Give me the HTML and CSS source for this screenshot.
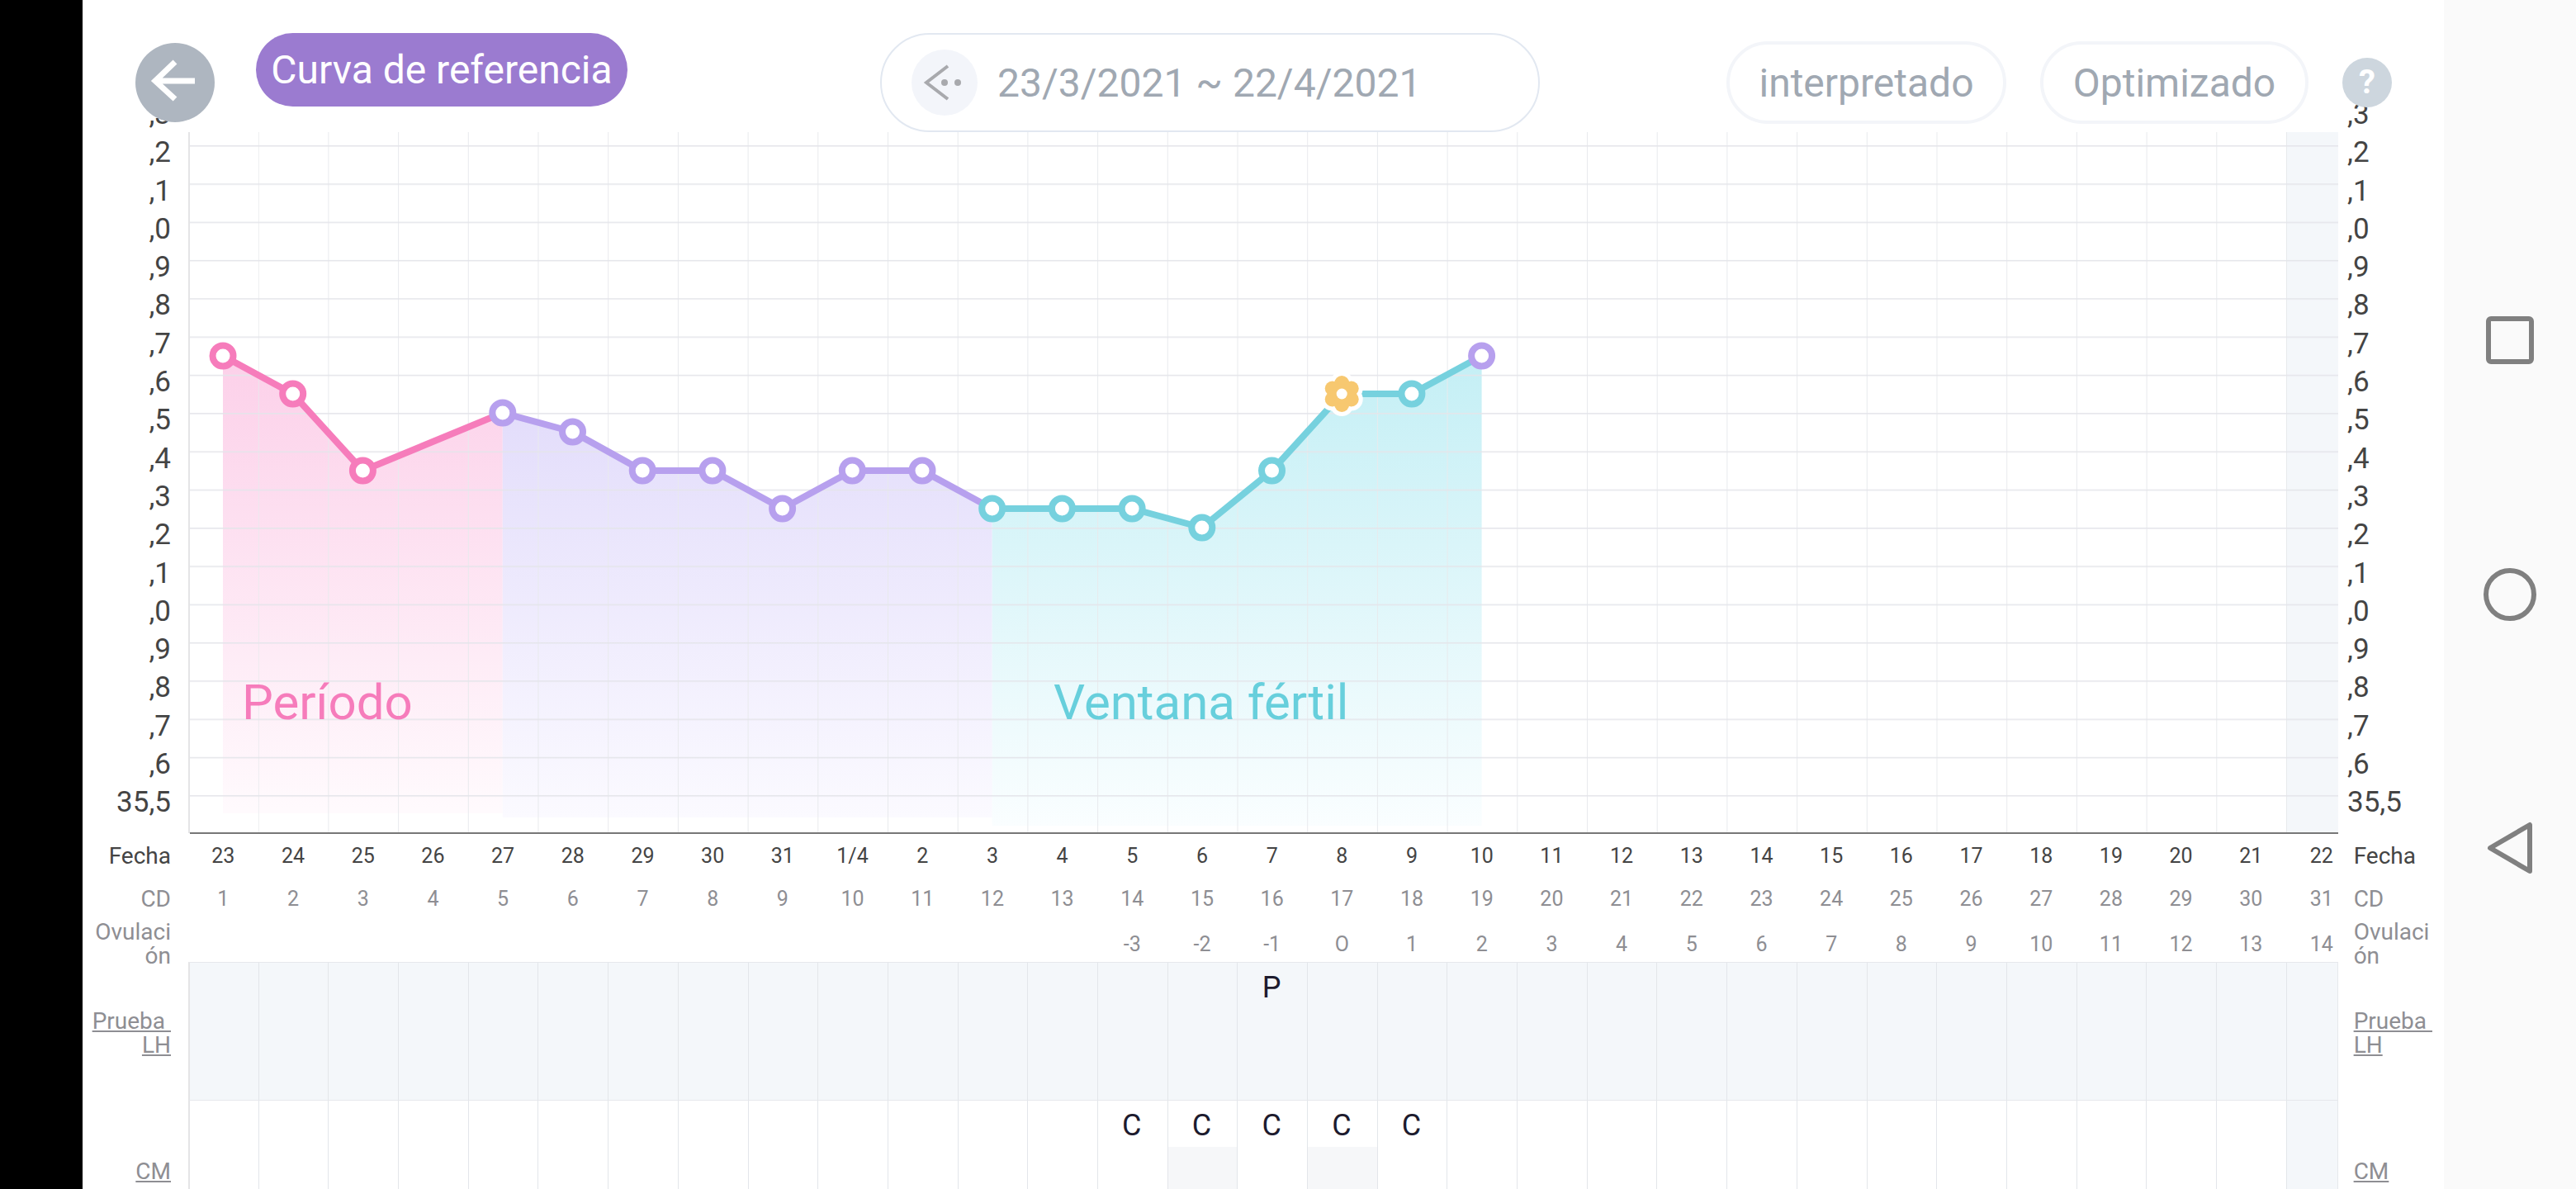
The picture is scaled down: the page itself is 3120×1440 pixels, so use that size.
FILE: index.html
```html
<!DOCTYPE html>
<html>
<head>
  <title>Curva de referencia</title>
  <link rel="stylesheet" href="styles.css">
</head>
<body>
  <div class="black-strip"></div>

  <div class="screen">
    <div class="topbar">
      <div class="back-btn">
        <svg width="96" height="96" viewBox="0 0 96 96"><path d="M72 46H25M48 23L24 46L48 68" fill="none" stroke="#fff" stroke-width="7"/></svg>
      </div>
      <div class="ref-pill">Curva de referencia</div>
      <div class="date-pill">
        <div class="date-icon">
          <svg width="80" height="80" viewBox="0 0 80 80"><path d="M44 20L18 40L44 60" fill="none" stroke="#a8a9ad" stroke-width="4"/><circle cx="40" cy="40" r="4" fill="#a8a9ad"/><circle cx="56" cy="40" r="4" fill="#a8a9ad"/></svg>
        </div>
        <span>23/3/2021 ~ 22/4/2021</span>
      </div>
      <div class="mode-pill mode-first">interpretado</div>
      <div class="mode-pill mode-second">Optimizado</div>
      <div class="help-btn">?</div>
    </div>

    <div class="chart">
      <div class="axis axis-left">
        <span>,3</span><span>,2</span><span>,1</span><span>,0</span><span>,9</span><span>,8</span><span>,7</span><span>,6</span><span>,5</span><span>,4</span><span>,3</span><span>,2</span><span>,1</span><span>,0</span><span>,9</span><span>,8</span><span>,7</span><span>,6</span><span>35,5</span>
      </div>

      <svg class="plot" width="2604" height="850" viewBox="0 0 2604 850">
        <defs>
          <linearGradient id="fillPink" gradientUnits="userSpaceOnUse" x1="0" y1="271" x2="0" y2="820">
            <stop offset="0" stop-color="#fcd0e9"/><stop offset="1" stop-color="#fffafd"/>
          </linearGradient>
          <linearGradient id="fillPurple" gradientUnits="userSpaceOnUse" x1="0" y1="340" x2="0" y2="830">
            <stop offset="0" stop-color="#e3ddfb"/><stop offset="1" stop-color="#fbfaff"/>
          </linearGradient>
          <linearGradient id="fillTeal" gradientUnits="userSpaceOnUse" x1="0" y1="271" x2="0" y2="840">
            <stop offset="0" stop-color="#c4eff5"/><stop offset="1" stop-color="#fafeff"/>
          </linearGradient>
          <pattern id="vlines" width="84.7" height="850" patternUnits="userSpaceOnUse">
            <rect x="0" width="1" height="850" fill="#e8eaed"/>
          </pattern>
          <pattern id="hlines" width="2604" height="46.3" y="16" patternUnits="userSpaceOnUse">
            <rect y="0" width="2604" height="1.5" fill="#e4e5ea"/>
          </pattern>
        </defs>

        <!-- zona del ultimo dia -->
        <rect x="2541" y="0" width="63" height="850" fill="#f4f7fa"/>

        <!-- relleno bajo la curva -->
        <path d="M42 271L126.7 317L211.4 410L380.8 340V825H42Z" fill="url(#fillPink)"/>
        <path d="M380.8 340L465.5 363L550.2 410L634.9 410L719.6 456L804.3 410L889 410L973.7 456V830H380.8Z" fill="url(#fillPurple)"/>
        <path d="M973.7 456L1058.4 456L1143.1 456L1227.8 479L1312.5 410L1397.2 317L1481.9 317L1566.6 271V840H973.7Z" fill="url(#fillTeal)"/>

        <rect x="84.7" y="0" width="2520" height="849" fill="url(#vlines)"/>
        <rect x="2" y="16" width="2602" height="800" fill="url(#hlines)"/>
        <rect x="0" y="0" width="2" height="849" fill="#e4e4e6"/>
        <rect x="2" y="848" width="2602" height="2" fill="#777"/>

        <text class="zone-label zone-pink" x="65" y="711">Período</text>
        <text class="zone-label zone-teal" x="1048" y="711">Ventana fértil</text>

        <polyline class="curve" stroke="#f67cbb" points="42,271 126.7,317 211.4,410 380.8,340"/>
        <polyline class="curve" stroke="#b7a0ee" points="380.8,340 465.5,363 550.2,410 634.9,410 719.6,456 804.3,410 889,410 973.7,456"/>
        <polyline class="curve" stroke="#76d1de" points="973.7,456 1058.4,456 1143.1,456 1227.8,479 1312.5,410 1397.2,317 1481.9,317 1566.6,271"/>

        <g class="dots" stroke="#f67cbb">
          <circle cx="42" cy="271" r="12.5"/><circle cx="126.7" cy="317" r="12.5"/><circle cx="211.4" cy="410" r="12.5"/>
        </g>
        <g class="dots" stroke="#b7a0ee">
          <circle cx="380.8" cy="340" r="12.5"/><circle cx="465.5" cy="363" r="12.5"/><circle cx="550.2" cy="410" r="12.5"/><circle cx="634.9" cy="410" r="12.5"/><circle cx="719.6" cy="456" r="12.5"/><circle cx="804.3" cy="410" r="12.5"/><circle cx="889" cy="410" r="12.5"/><circle cx="1566.6" cy="271" r="12.5"/>
        </g>
        <g class="dots" stroke="#76d1de">
          <circle cx="973.7" cy="456" r="12.5"/><circle cx="1058.4" cy="456" r="12.5"/><circle cx="1143.1" cy="456" r="12.5"/><circle cx="1227.8" cy="479" r="12.5"/><circle cx="1312.5" cy="410" r="12.5"/><circle cx="1481.9" cy="317" r="12.5"/>
        </g>

        <!-- flor de ovulacion -->
        <g transform="translate(1397.2 317)">
          <g fill="#fff" stroke="#fff" stroke-width="10">
            <circle cx="0" cy="-13" r="9"/><circle cx="11.5" cy="-6.5" r="9"/><circle cx="11.5" cy="6.5" r="9"/><circle cx="0" cy="13" r="9"/><circle cx="-11.5" cy="6.5" r="9"/><circle cx="-11.5" cy="-6.5" r="9"/>
          </g>
          <g fill="#f7c870">
            <circle cx="0" cy="-13" r="9"/><circle cx="11.5" cy="-6.5" r="9"/><circle cx="11.5" cy="6.5" r="9"/><circle cx="0" cy="13" r="9"/><circle cx="-11.5" cy="6.5" r="9"/><circle cx="-11.5" cy="-6.5" r="9"/><circle r="12"/>
          </g>
          <circle r="6.5" fill="#fff"/>
        </g>
      </svg>

      <div class="axis axis-right">
        <span>,3</span><span>,2</span><span>,1</span><span>,0</span><span>,9</span><span>,8</span><span>,7</span><span>,6</span><span>,5</span><span>,4</span><span>,3</span><span>,2</span><span>,1</span><span>,0</span><span>,9</span><span>,8</span><span>,7</span><span>,6</span><span>35,5</span>
      </div>
    </div>

    <div class="row row-date">
      <div class="row-label label-left">Fecha</div>
      <span>23</span><span>24</span><span>25</span><span>26</span><span>27</span><span>28</span><span>29</span><span>30</span><span>31</span><span>1/4</span><span>2</span><span>3</span><span>4</span><span>5</span><span>6</span><span>7</span><span>8</span><span>9</span><span>10</span><span>11</span><span>12</span><span>13</span><span>14</span><span>15</span><span>16</span><span>17</span><span>18</span><span>19</span><span>20</span><span>21</span><span class="last">22</span>
      <div class="row-label label-right">Fecha</div>
    </div>

    <div class="row row-cd">
      <div class="row-label label-left">CD</div>
      <span>1</span><span>2</span><span>3</span><span>4</span><span>5</span><span>6</span><span>7</span><span>8</span><span>9</span><span>10</span><span>11</span><span>12</span><span>13</span><span>14</span><span>15</span><span>16</span><span>17</span><span>18</span><span>19</span><span>20</span><span>21</span><span>22</span><span>23</span><span>24</span><span>25</span><span>26</span><span>27</span><span>28</span><span>29</span><span>30</span><span class="last">31</span>
      <div class="row-label label-right">CD</div>
    </div>

    <div class="row row-ovu">
      <div class="row-label label-left">Ovulaci<br>ón</div>
      <span></span><span></span><span></span><span></span><span></span><span></span><span></span><span></span><span></span><span></span><span></span><span></span><span></span><span>-3</span><span>-2</span><span>-1</span><span>O</span><span>1</span><span>2</span><span>3</span><span>4</span><span>5</span><span>6</span><span>7</span><span>8</span><span>9</span><span>10</span><span>11</span><span>12</span><span>13</span><span class="last">14</span>
      <div class="row-label label-right">Ovulaci<br>ón</div>
    </div>

    <div class="row row-track row-lh">
      <div class="row-label label-left"><u>Prueba&nbsp;<br>LH</u></div>
      <div class="cell"></div><div class="cell"></div><div class="cell"></div><div class="cell"></div><div class="cell"></div><div class="cell"></div><div class="cell"></div><div class="cell"></div><div class="cell"></div><div class="cell"></div><div class="cell"></div><div class="cell"></div><div class="cell"></div><div class="cell"></div><div class="cell"></div>
      <div class="cell"><div class="mark">P</div></div>
      <div class="cell"></div><div class="cell"></div><div class="cell"></div><div class="cell"></div><div class="cell"></div><div class="cell"></div><div class="cell"></div><div class="cell"></div><div class="cell"></div><div class="cell"></div><div class="cell"></div><div class="cell"></div><div class="cell"></div><div class="cell"></div><div class="cell"></div>
      <div class="row-label label-right"><u>Prueba&nbsp;<br>LH</u></div>
    </div>

    <div class="row row-track row-cm">
      <div class="row-label label-left"><u>CM</u></div>
      <div class="cell"></div><div class="cell"></div><div class="cell"></div><div class="cell"></div><div class="cell"></div><div class="cell"></div><div class="cell"></div><div class="cell"></div><div class="cell"></div><div class="cell"></div><div class="cell"></div><div class="cell"></div><div class="cell"></div>
      <div class="cell"><div class="mark">C</div></div>
      <div class="cell"><div class="mark">C</div><div class="shade"></div></div>
      <div class="cell"><div class="mark">C</div></div>
      <div class="cell"><div class="mark">C</div><div class="shade"></div></div>
      <div class="cell"><div class="mark">C</div></div>
      <div class="cell"></div><div class="cell"></div><div class="cell"></div><div class="cell"></div><div class="cell"></div><div class="cell"></div><div class="cell"></div><div class="cell"></div><div class="cell"></div><div class="cell"></div><div class="cell"></div><div class="cell"></div><div class="cell"></div>
      <div class="row-label label-right"><u>CM</u></div>
    </div>
  </div>

  <div class="navbar">
    <div class="nav-btn">
      <svg width="60" height="60" viewBox="0 0 60 60"><rect x="4" y="4" width="52" height="52" rx="3" fill="none" stroke="#808080" stroke-width="6"/></svg>
    </div>
    <div class="nav-btn">
      <svg width="66" height="66" viewBox="0 0 66 66"><circle cx="33" cy="33" r="29" fill="none" stroke="#808080" stroke-width="6"/></svg>
    </div>
    <div class="nav-btn">
      <svg width="60" height="70" viewBox="0 0 60 70"><path d="M54 6V62L6 34Z" fill="none" stroke="#808080" stroke-width="6" stroke-linejoin="round"/></svg>
    </div>
  </div>
</body>
</html>
```

FILE: styles.css
```css
body {
  display: flex;
  width: 3120px;
  height: 1440px;
  margin: 0;
  overflow: hidden;
  background-color: #000;
  font-family: Roboto, "Liberation Sans", sans-serif;
}

.black-strip {
  width: 100px;
  flex-shrink: 0;
}

.screen {
  width: 2860px;
  height: 1440px;
  flex-shrink: 0;
  overflow: hidden;
  background-color: #fff;
}

/* barra superior */
.topbar {
  position: relative;
  z-index: 1;
  display: flex;
  align-items: flex-start;
  box-sizing: border-box;
  height: 160px;
  padding: 40px 0 0 64px;
}

.back-btn {
  width: 96px;
  height: 96px;
  margin-top: 12px;
  border-radius: 50%;
  background-color: #aeb6c0;
}

.back-btn svg,
.date-icon svg,
.nav-btn svg {
  display: block;
}

.ref-pill {
  display: flex;
  align-items: center;
  justify-content: center;
  width: 450px;
  height: 89px;
  margin-left: 50px;
  border-radius: 45px;
  background-color: #9b7bd0;
  color: #fff;
  font-size: 48px;
}

.date-pill {
  display: flex;
  align-items: center;
  box-sizing: border-box;
  width: 799px;
  height: 120px;
  margin-left: 306px;
  padding-left: 36px;
  border: 2px solid #e2e8f1;
  border-radius: 60px;
  color: #a0a8b2;
  font-size: 48px;
}

.date-icon {
  width: 80px;
  height: 80px;
  margin-right: 24px;
  border-radius: 50%;
  background-color: #f3f5fa;
}

.mode-pill {
  display: flex;
  align-items: center;
  justify-content: center;
  box-sizing: border-box;
  height: 100px;
  margin-top: 10px;
  border: 4px solid #f3f5f9;
  border-radius: 50px;
  color: #a0a8b2;
  font-size: 48px;
}

.mode-first {
  width: 339px;
  margin-left: 226px;
}

.mode-second {
  width: 325px;
  margin-left: 41px;
}

.help-btn {
  width: 60px;
  height: 60px;
  margin: 30px 0 0 41px;
  border-radius: 50%;
  background-color: #cdd6de;
  color: #fff;
  font-size: 40px;
  font-weight: bold;
  line-height: 60px;
  text-align: center;
}

/* grafica */
.chart {
  display: flex;
  height: 850px;
}

.plot {
  display: block;
  flex-shrink: 0;
}

.axis {
  display: flex;
  flex-direction: column;
  width: 128px;
  flex-shrink: 0;
  margin-top: -44px;
  color: #444;
  font-size: 35px;
}

.axis span {
  height: 46.3px;
  line-height: 46.3px;
}

.axis-left {
  box-sizing: border-box;
  padding-right: 21px;
  text-align: right;
}

.axis-right {
  box-sizing: border-box;
  padding-left: 11px;
}

.zone-label {
  font-size: 60px;
}

.zone-pink {
  fill: #f67cbb;
}

.zone-teal {
  fill: #67cfdc;
}

.curve {
  fill: none;
  stroke-width: 8;
  stroke-linejoin: round;
}

.dots circle {
  fill: #fff;
  stroke-width: 8;
}

/* filas de datos */
.row {
  display: grid;
  grid-template-columns: 128px repeat(30, 84.7px) 63px 128px;
  align-items: center;
  text-align: center;
}

.row-label {
  font-size: 28px;
  line-height: 29px;
}

.label-left {
  padding-right: 21px;
  text-align: right;
}

.label-right {
  padding-left: 19px;
  text-align: left;
}

.last {
  padding-left: 29px;
  text-align: left;
}

.row-date {
  height: 52px;
  color: #444;
  font-size: 25px;
}

.row-cd {
  height: 52px;
  color: #8e8e93;
  font-size: 25px;
}

.row-ovu {
  height: 51px;
  color: #8e8e93;
  font-size: 25px;
}

.row-track {
  align-items: stretch;
  height: 168px;
}

.row-track .row-label {
  align-self: center;
  padding-top: 3px;
  color: #8e8e93;
}

.cell {
  display: flex;
  flex-direction: column;
  border-left: 1px solid #e3e6ea;
  color: #1d1b2e;
  font-size: 36px;
}

.label-left + .cell {
  border-left: 2px solid #e4e4e6;
}

.row-lh .cell {
  border-top: 1px solid #e6e8ec;
  border-bottom: 1px solid #e6e8ec;
  background-color: #f4f7fa;
}

/* ultima columna */
.row-cm .cell:nth-last-child(2) {
  background-color: #f4f7fa;
}

.row-track .cell:nth-last-child(2) {
  border-right: 1px solid #e6e8ec;
}

.mark {
  height: 56px;
  margin-left: -2px;
  line-height: 61px;
}

.shade {
  flex: 1;
  background-color: #f6f7f9;
}

/* barra de navegacion */
.navbar {
  display: flex;
  flex: 1;
  flex-direction: column;
  align-items: center;
  padding-top: 258px;
  background-color: #fafafa;
}

.nav-btn {
  display: flex;
  align-items: center;
  justify-content: center;
  height: 308px;
  flex-shrink: 0;
}
```
